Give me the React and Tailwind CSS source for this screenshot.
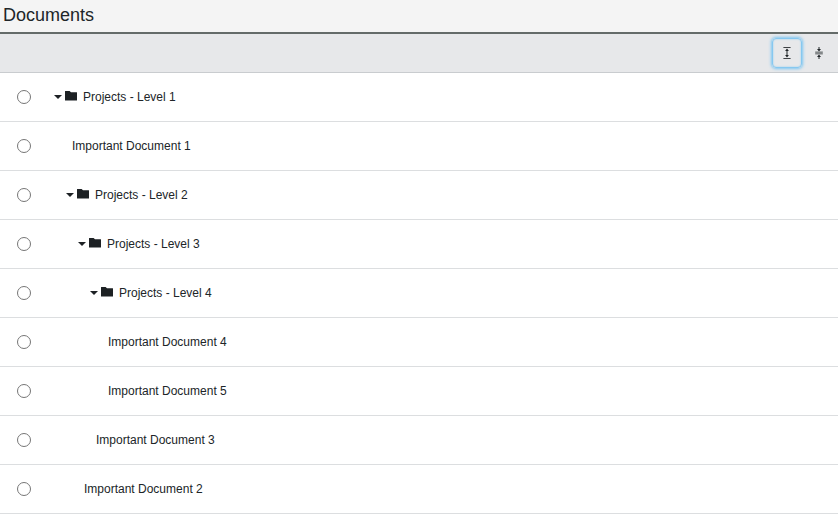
const rows = [
  { label: "Projects - Level 1", folder: true, indent: 54 },
  { label: "Important Document 1", indent: 72 },
  { label: "Projects - Level 2", folder: true, indent: 66 },
  { label: "Projects - Level 3", folder: true, indent: 78 },
  { label: "Projects - Level 4", folder: true, indent: 90 },
  { label: "Important Document 4", indent: 108 },
  { label: "Important Document 5", indent: 108 },
  { label: "Important Document 3", indent: 96 },
  { label: "Important Document 2", indent: 84 },
];

function ExpandIcon() {
  return (
    <svg width="14" height="14" viewBox="0 0 14 14" fill="#202528">
      <path d="M3.4 1h7.2v1H3.4zM3.4 12h7.2v1H3.4z" fillOpacity="0.85" />
      <path d="M6 5h2v4H6z" fillOpacity="0.5" />
      <path d="M7 2.6 8.9 5H5.1zM7 11.4 8.9 9H5.1z" />
    </svg>
  );
}

function CollapseIcon() {
  return (
    <svg width="14" height="14" viewBox="0 0 14 14" fill="#202528">
      <path d="M3.2 5.4h7.6v3.1H3.2z" fillOpacity="0.5" />
      <path d="M6 1h2v2H6zM6 11h2v2H6z" fillOpacity="0.5" />
      <path d="M5 3h4L7 5.4zM5 11h4L7 8.6z" />
    </svg>
  );
}

function Row({ row }) {
  return (
    <label className="flex h-[49px] items-center border-b border-[#dcdee0] bg-white">
      <input type="radio" name="document" className="ml-[17px] size-[14px] shrink-0" />
      <span className="-ml-[31px] flex items-center" style={{ paddingLeft: row.indent }}>
        {row.folder && (
          <>
            <svg width="8" height="4" viewBox="0 0 8 4" className="mr-[3px]" fill="#1d2124">
              <path d="M0 0h8L4 4z" />
            </svg>
            <svg width="12" height="10" viewBox="0 0 12 10" className="mr-[6px] mb-[2px]" fill="#1d2124">
              <path d="M0 .3Q0 0 .3 0H4.6L6 1.3h5.7q.3 0 .3.3V9.3q0 .3-.3.3H.3Q0 9.6 0 9.3z" />
            </svg>
          </>
        )}
        <span className="whitespace-nowrap text-xs leading-4">{row.label}</span>
      </span>
    </label>
  );
}

export default function App() {
  return (
    <div className="h-[514px] w-full overflow-hidden bg-white font-['Liberation_Sans',Arial,sans-serif] text-[#202528]">
      <header className="h-[34px] border-b-2 border-[#646b69] bg-[#f4f4f4] pl-[3px] pt-[3px]">
        <h1 className="text-[18px] leading-6">Documents</h1>
      </header>
      <div className="flex h-[39px] items-center justify-end gap-[2px] border-b border-[#c9cccf] bg-[#e7e8ea] pr-1">
        <button
          aria-label="Expand all"
          className="flex size-[30px] items-center justify-center rounded-[4px] border border-[#86c8f0] shadow-[0_0_3px_1px_#7cc6f2,inset_0_0_2px_0_#8fcdf2]"
        >
          <ExpandIcon />
        </button>
        <button aria-label="Collapse all" className="flex size-[30px] items-center justify-center">
          <CollapseIcon />
        </button>
      </div>
      {rows.map((row) => (
        <Row key={row.label} row={row} />
      ))}
    </div>
  );
}
